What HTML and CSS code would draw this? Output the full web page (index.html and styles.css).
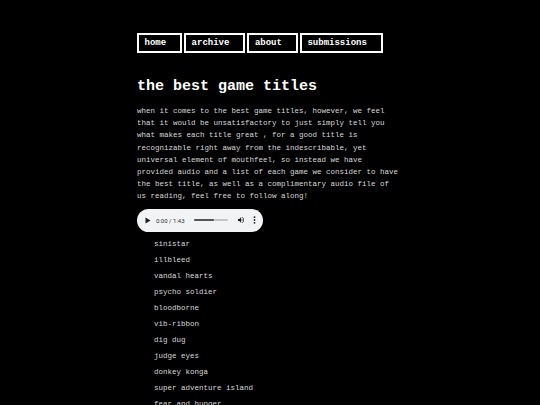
FILE: index.html
```html
<!DOCTYPE html>
<html>
<head>
<meta charset="utf-8">
<link rel="stylesheet" href="styles.css">
</head>
<body>
<div class="page">
  <nav class="nav">
    <a class="nav-link" href="#">home</a>
    <a class="nav-link" href="#">archive</a>
    <a class="nav-link" href="#">about</a>
    <a class="nav-link" href="#">submissions</a>
  </nav>
  <h1 class="title">the best game titles</h1>
  <p class="intro">when it comes to the best game titles, however, we feel that it would be unsatisfactory to just simply tell you what makes each title great , for a good title is recognizable right away from the indescribable, yet universal element of mouthfeel, so instead we have provided audio and a list of each game we consider to have the best title, as well as a complimentary audio file of us reading, feel free to follow along!</p>
  <div class="player">
    <svg class="play" width="6" height="7" viewBox="0 0 6 7"><path d="M0.5 0.5 L5.5 3.5 L0.5 6.5 Z" fill="#1f1f1f"/></svg>
    <span class="time">0:00 / 1:43</span>
    <div class="track"><div class="track-fill"></div></div>
    <svg class="vol" width="8" height="8" viewBox="0 0 24 24"><path fill="#1f1f1f" d="M3 9v6h4l5 5V4L7 9H3zm13.5 3c0-1.770-1.020-3.290-2.500-4.030v8.050c1.480-.730 2.500-2.250 2.500-4.020zM14 3.230v2.060c2.890.860 5 3.540 5 6.710s-2.110 5.850-5 6.710v2.060c4.010-.910 7-4.490 7-8.770s-2.990-7.860-7-8.770z"/></svg>
    <svg class="more" width="3" height="8" viewBox="0 0 3 8"><circle cx="1.5" cy="1.2" r="0.9" fill="#1f1f1f"/><circle cx="1.5" cy="4" r="0.9" fill="#1f1f1f"/><circle cx="1.5" cy="6.8" r="0.9" fill="#1f1f1f"/></svg>
  </div>
  <ul class="games">
    <li>sinistar</li>
    <li>illbleed</li>
    <li>vandal hearts</li>
    <li>psycho soldier</li>
    <li>bloodborne</li>
    <li>vib-ribbon</li>
    <li>dig dug</li>
    <li>judge eyes</li>
    <li>donkey konga</li>
    <li>super adventure island</li>
    <li>fear and hunger</li>
  </ul>
</div>
</body>
</html>
```

FILE: styles.css
```css
html, body {
  margin: 0;
  padding: 0;
  background: #000;
}
body {
  color: #e6e6e6;
  font-family: "Liberation Mono", "Courier New", monospace;
}
.page {
  width: 266px;
  margin: 0 auto;
  padding-top: 33px;
}
.nav {
  display: flex;
  gap: 2px;
}
.nav-link {
  display: block;
  border: 2px solid #fff;
  color: #fff;
  text-decoration: none;
  font-weight: bold;
  font-size: 9px;
  line-height: 16px;
  padding: 0 14px 0 5.5px;
}
.title {
  margin: 24px 0 0 0;
  font-size: 15px;
  line-height: 20px;
  font-weight: bold;
  color: #fff;
}
.intro {
  margin: 8px 3px 0 0;
  font-size: 7.5px;
  line-height: 12.2px;
  color: #d8d8d8;
}
.player {
  margin-top: 6px;
  width: 126px;
  height: 23px;
  border-radius: 12px;
  background: #f1f3f4;
  display: flex;
  align-items: center;
  box-sizing: border-box;
  padding: 0 0 0 8px;
}
.play {
  display: block;
}
.time {
  margin-left: 5px;
  font-family: "Roboto", "Liberation Sans", sans-serif;
  font-size: 6px;
  color: #333;
  white-space: nowrap;
}
.track {
  margin-left: 9px;
  width: 34px;
  height: 1.5px;
  background: #c4c4c4;
  border-radius: 1px;
}
.track-fill {
  width: 60%;
  height: 100%;
  background: #555;
  border-radius: 1px;
}
.vol {
  margin-left: 9px;
  display: block;
}
.more {
  margin-left: 8px;
  display: block;
}
.games {
  list-style: none;
  margin: 4px 0 0 0;
  padding: 0 0 0 17px;
  font-size: 7.5px;
  line-height: 16px;
  color: #d8d8d8;
}
```
